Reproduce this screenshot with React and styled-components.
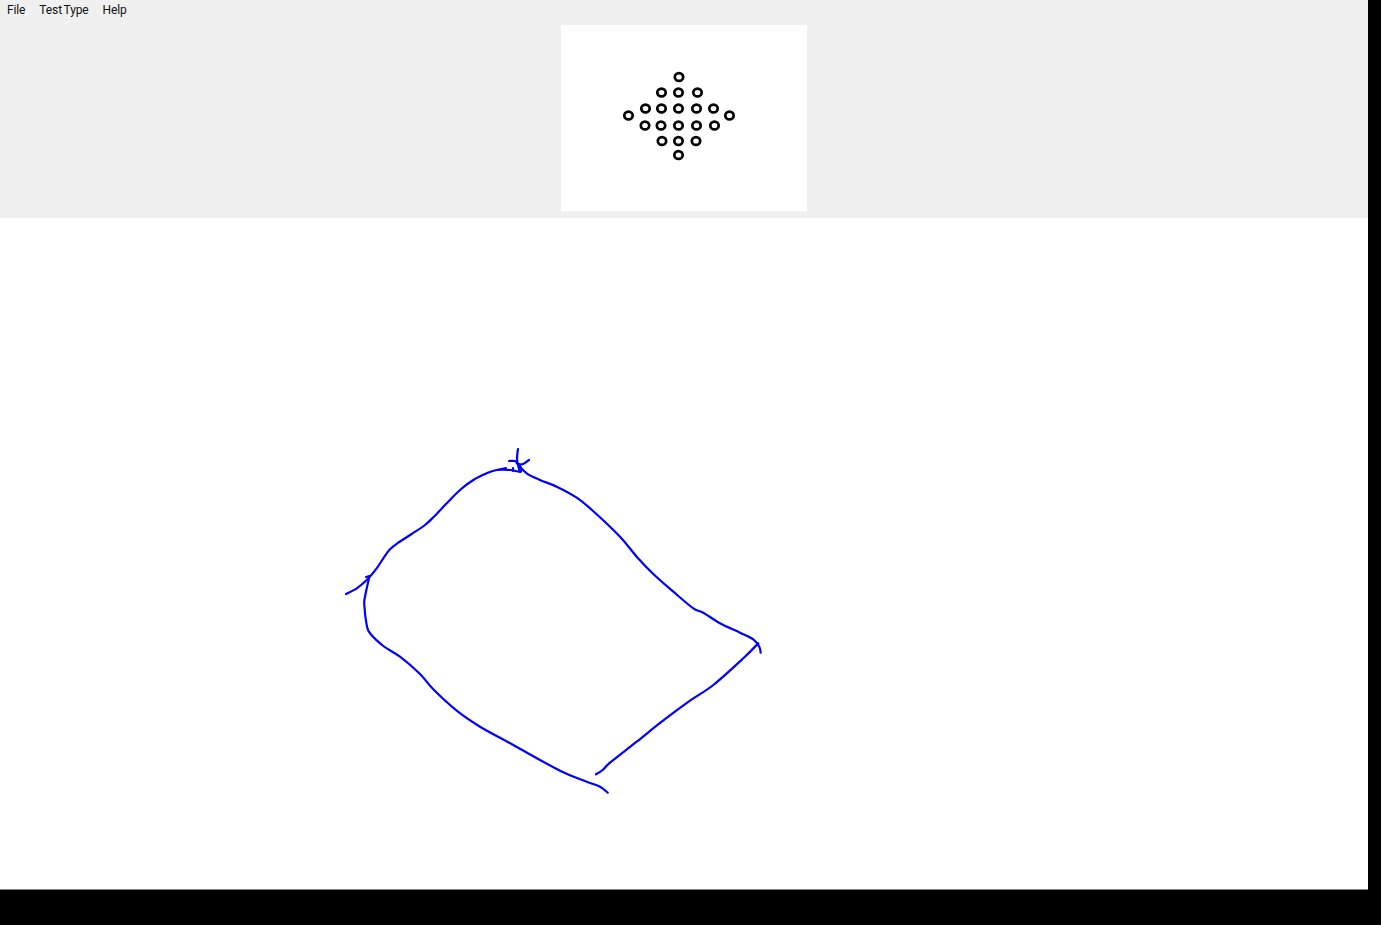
import React from "react";
import styled, { createGlobalStyle } from "styled-components";

const Global = createGlobalStyle`
  html, body { margin: 0; padding: 0; background: #000; overflow: hidden; }
  #root { width: 1381px; height: 925px; }
`;

const Screen = styled.div`
  width: 1381px;
  height: 925px;
  background: #000;
`;

const Win = styled.div`
  width: 1368px;
  height: 890px;
  box-sizing: border-box;
  display: flex;
  flex-direction: column;
  background: #fff;
  border-bottom: 1px solid #808080;
`;

const Header = styled.header`
  height: 218px;
  flex: none;
  display: flex;
  flex-direction: column;
  align-items: center;
  background: #f0f0f0;
`;

const MenuBar = styled.nav`
  align-self: stretch;
  height: 20px;
  display: flex;
  font-family: Roboto, "Liberation Sans", sans-serif;
  font-size: 12px;
  letter-spacing: -0.12px;
  word-spacing: -1px;
  line-height: 20px;
  color: #111;
`;

const MenuItem = styled.span`
  padding: 0 7px;
`;

const Preview = styled.div`
  width: 246px;
  height: 186px;
  margin-top: 5px;
  background: #fff;
`;

const PreviewArt = styled.svg`
  display: block;
  width: 246px;
  height: 186px;
`;

const Canvas = styled.main`
  flex: 1;
  background: #fff;
`;

const CanvasArt = styled.svg`
  display: block;
  width: 1368px;
  height: 671px;
`;

const dotRows = [
  [[679, 77]],
  [[661.5, 92.5], [678.5, 92.5], [697.5, 92.5]],
  [[645.5, 108.5], [661.5, 108.5], [678.5, 108.5], [696.5, 108.5], [713.5, 108.5]],
  [[628.5, 115.5], [729.5, 115.5]],
  [[645, 125.5], [661, 125.5], [678.5, 125.5], [696.5, 125.5], [714.5, 125.5]],
  [[662, 141], [678.5, 141], [696, 141]],
  [[678.5, 155]],
];

const strokes = [
  [[346, 594], [356.7, 588.3], [366.7, 580], [376.7, 568.3], [383.3, 558.3], [390, 549.3], [398.3, 542.7], [411.7, 534], [425, 525], [433.3, 517.3], [446.7, 503.3], [460, 490], [473.3, 480], [486.7, 473.3], [496.7, 470], [510, 470], [521, 471.5], [519, 464]],
  [[518, 464], [526.7, 473.3], [540, 480], [556.7, 486.7], [576.7, 497.7], [595, 512.7], [620, 536.7], [636.7, 556.7], [653.3, 574], [673.3, 591.7], [693.3, 608.3], [703.3, 612.7], [720, 623.3], [740, 632.7], [753.3, 639.3], [759.3, 646.7], [760.7, 652.7]],
  [[758.3, 643.3], [743.3, 658.3], [713.3, 685], [690, 700.7], [661.7, 721.7], [636.7, 741.7], [610, 762.7], [602.7, 770], [596, 774.3]],
  [[369.5, 576], [365, 596.7], [364.3, 605], [366.7, 625], [370, 633.3], [383.3, 646], [400, 656.7], [420, 674], [433.3, 689.3], [456.7, 710.7], [480, 726.7], [513.3, 745], [560, 770.7], [586.7, 781.7], [600, 786.7], [607.7, 792.7]],
  [[518, 449], [517, 458], [518, 465], [520, 472]],
  [[509, 461], [515, 461], [518, 464], [523, 464], [529, 460]],
  [[497, 470], [506, 468]],
  [[513, 468], [513, 471]],
  [[366, 577], [369.5, 576]],
];

const toPath = (pts) => {
  let d = `M${pts[0][0]} ${pts[0][1]}`;
  for (let i = 0; i < pts.length - 1; i++) {
    const p0 = pts[Math.max(i - 1, 0)];
    const p1 = pts[i];
    const p2 = pts[i + 1];
    const p3 = pts[Math.min(i + 2, pts.length - 1)];
    const c1x = p1[0] + (p2[0] - p0[0]) / 6;
    const c1y = p1[1] + (p2[1] - p0[1]) / 6;
    const c2x = p2[0] - (p3[0] - p1[0]) / 6;
    const c2y = p2[1] - (p3[1] - p1[1]) / 6;
    d += ` C${c1x} ${c1y} ${c2x} ${c2y} ${p2[0]} ${p2[1]}`;
  }
  return d;
};

export default function App() {
  return (
    <Screen>
      <Global />
      <Win>
        <Header>
          <MenuBar>
            <MenuItem>File</MenuItem>
            <MenuItem>Test Type</MenuItem>
            <MenuItem>Help</MenuItem>
          </MenuBar>
          <Preview>
            <PreviewArt viewBox="561 25 246 186">
              {dotRows.flat().map(([cx, cy], i) => (
                <ellipse key={i} cx={cx} cy={cy} rx="4.2" ry="3.9" fill="#fff" stroke="#000" strokeWidth="2.7" />
              ))}
            </PreviewArt>
          </Preview>
        </Header>
        <Canvas>
          <CanvasArt viewBox="0 218 1368 671">
            {strokes.map((pts, i) => (
              <path key={i} d={toPath(pts)} fill="none" stroke="#0000ff" strokeWidth="2.2" strokeLinecap="round" strokeLinejoin="round" />
            ))}
          </CanvasArt>
        </Canvas>
      </Win>
    </Screen>
  );
}
